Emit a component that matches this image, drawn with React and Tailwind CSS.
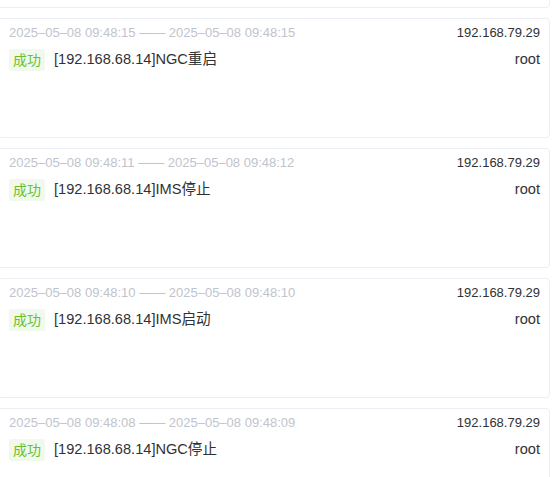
import React from "react";

const items = [
  { s: "2025–05–08 09:48:15", e: "2025–05–08 09:48:15", msg: "[192.168.68.14]NGC重启" },
  { s: "2025–05–08 09:48:11", e: "2025–05–08 09:48:12", msg: "[192.168.68.14]IMS停止" },
  { s: "2025–05–08 09:48:10", e: "2025–05–08 09:48:10", msg: "[192.168.68.14]IMS启动" },
  { s: "2025–05–08 09:48:08", e: "2025–05–08 09:48:09", msg: "[192.168.68.14]NGC停止" },
];

export default function App() {
  return (
    <div
      className="w-[556px] h-[477px] overflow-hidden bg-white"
      style={{ fontFamily: '"Liberation Sans", Arial, "Noto Sans CJK SC", sans-serif' }}
    >
      <div className="mt-[-112px] ml-[-2px] w-[552px] flex flex-col gap-[10px]">
        <div className="h-[120px] shrink-0 border border-[#ebeef5] rounded-[4px] bg-white" />
        {items.map((it, i) => (
          <div
            key={i}
            className="h-[120px] shrink-0 border border-[#ebeef5] rounded-[4px] bg-white pl-[10px] pr-[9px] pt-[4px]"
          >
            <div className="flex justify-between items-center h-[20px]">
              <span className="text-[13px] text-[#c0c4cc]">
                {it.s} —— {it.e}
              </span>
              <span className="text-[13px] text-[#303133]">192.168.79.29</span>
            </div>
            <div className="flex justify-between items-center mt-[6px] h-[22px]">
              <div className="flex items-center">
                <span className="h-[22px] px-[4px] flex items-center rounded-[3px] bg-[#f0f9eb] text-[#6cbf2c] text-[14px]">
                  成功
                </span>
                <span className="ml-[9px] text-[14.6px] text-[#303133]">{it.msg}</span>
              </div>
              <span className="text-[14.6px] text-[#303133]">root</span>
            </div>
          </div>
        ))}
      </div>
    </div>
  );
}
